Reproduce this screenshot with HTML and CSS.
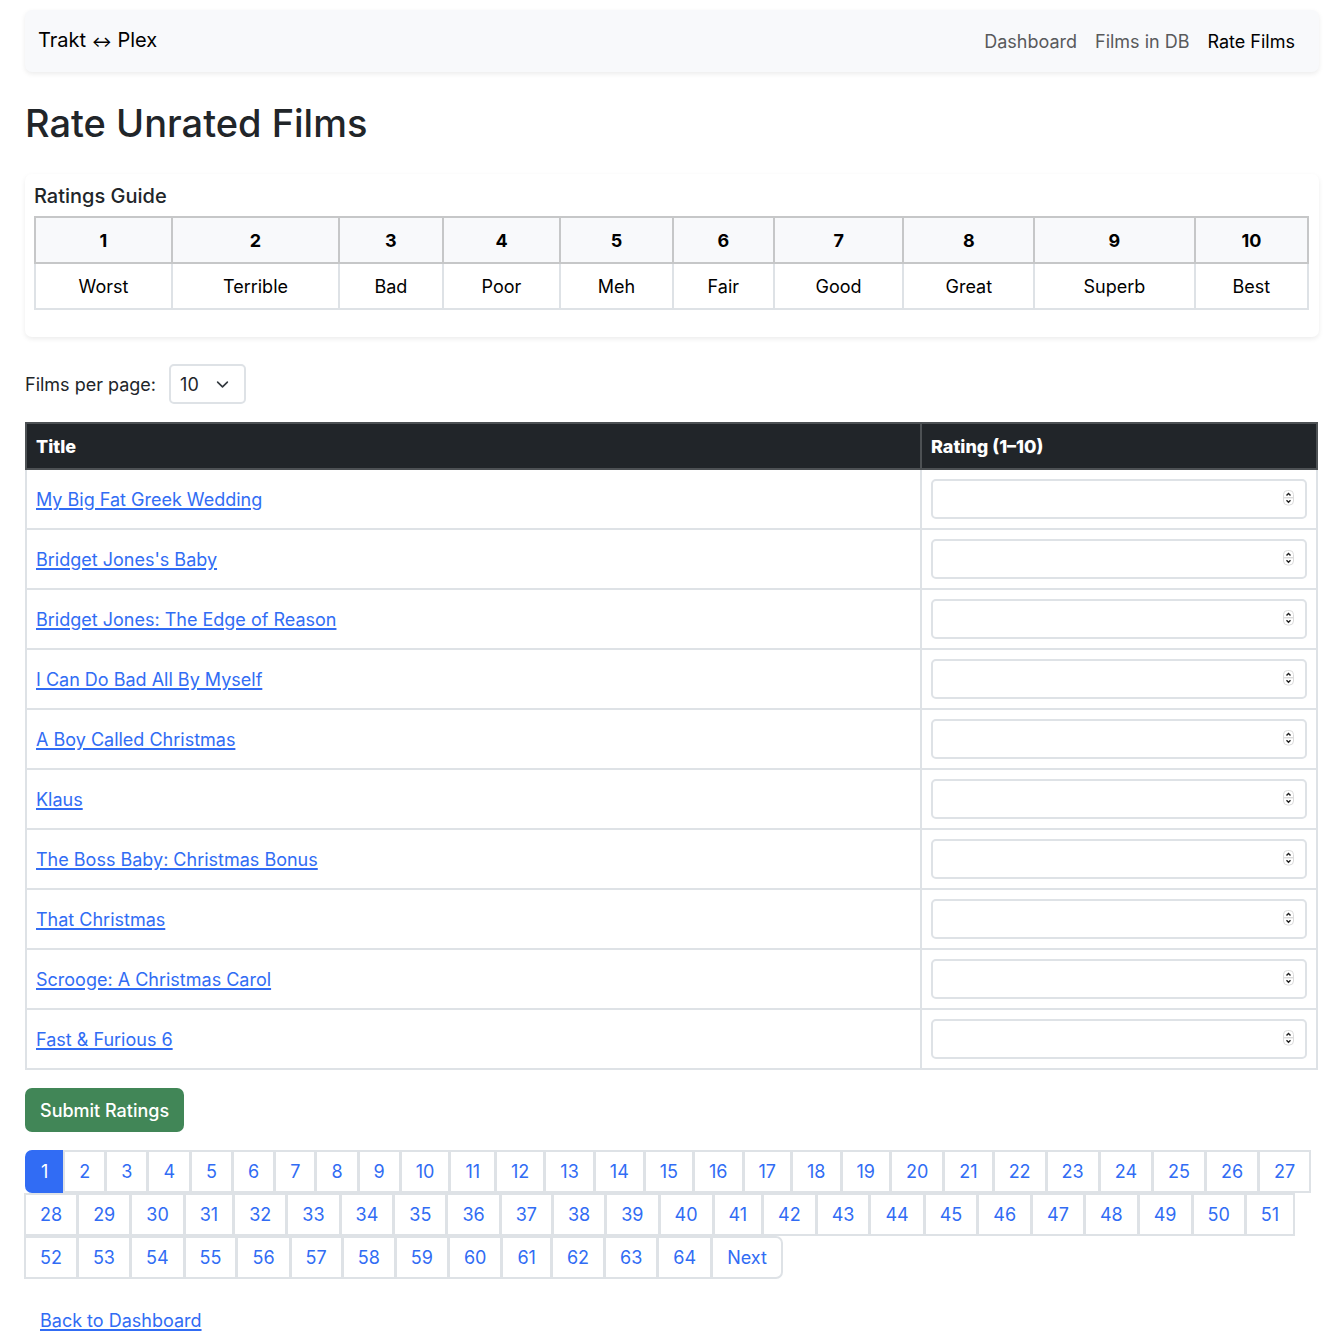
FILE: index.html
```html
<!DOCTYPE html>
<html lang="en">
<head>
<meta charset="utf-8">
<meta name="viewport" content="width=device-width, initial-scale=1">
<title>Rate Unrated Films</title>
<link rel="stylesheet" href="styles.css">
</head>
<body>
<nav class="navbar">
  <a class="brand" href="#">Trakt <span class="arrow">↔</span> Plex</a>
  <ul class="nav-links">
    <li><a href="#">Dashboard</a></li>
    <li><a href="#">Films in DB</a></li>
    <li><a class="current" href="#" aria-current="page">Rate Films</a></li>
  </ul>
</nav>
<main>
  <h1>Rate Unrated Films</h1>
  <section class="guide">
    <h2>Ratings Guide</h2>
    <table class="guide-table">
      <thead>
        <tr><th>1</th><th>2</th><th>3</th><th>4</th><th>5</th><th>6</th><th>7</th><th>8</th><th>9</th><th>10</th></tr>
      </thead>
      <tbody>
        <tr><td>Worst</td><td>Terrible</td><td>Bad</td><td>Poor</td><td>Meh</td><td>Fair</td><td>Good</td><td>Great</td><td>Superb</td><td>Best</td></tr>
      </tbody>
    </table>
  </section>
  <form class="per-page">
    <label for="per-page">Films per page:</label>
    <select id="per-page"><option>10</option><option>25</option><option>50</option></select>
  </form>
  <form>
    <table class="films">
      <thead>
        <tr><th>Title</th><th class="rating-col">Rating (1–10)</th></tr>
      </thead>
      <tbody>
        <tr><td><a href="#" id="f1">My Big Fat Greek Wedding</a></td><td><input type="number" min="1" max="10" aria-labelledby="f1"></td></tr>
        <tr><td><a href="#" id="f2">Bridget Jones's Baby</a></td><td><input type="number" min="1" max="10" aria-labelledby="f2"></td></tr>
        <tr><td><a href="#" id="f3">Bridget Jones: The Edge of Reason</a></td><td><input type="number" min="1" max="10" aria-labelledby="f3"></td></tr>
        <tr><td><a href="#" id="f4">I Can Do Bad All By Myself</a></td><td><input type="number" min="1" max="10" aria-labelledby="f4"></td></tr>
        <tr><td><a href="#" id="f5">A Boy Called Christmas</a></td><td><input type="number" min="1" max="10" aria-labelledby="f5"></td></tr>
        <tr><td><a href="#" id="f6">Klaus</a></td><td><input type="number" min="1" max="10" aria-labelledby="f6"></td></tr>
        <tr><td><a href="#" id="f7">The Boss Baby: Christmas Bonus</a></td><td><input type="number" min="1" max="10" aria-labelledby="f7"></td></tr>
        <tr><td><a href="#" id="f8">That Christmas</a></td><td><input type="number" min="1" max="10" aria-labelledby="f8"></td></tr>
        <tr><td><a href="#" id="f9">Scrooge: A Christmas Carol</a></td><td><input type="number" min="1" max="10" aria-labelledby="f9"></td></tr>
        <tr><td><a href="#" id="f10">Fast &amp; Furious 6</a></td><td><input type="number" min="1" max="10" aria-labelledby="f10"></td></tr>
      </tbody>
    </table>
    <button class="submit" type="submit">Submit Ratings</button>
  </form>
  <nav aria-label="Pages">
    <ul class="pages">
      <li><a class="active" href="#" aria-current="page">1</a></li>
      <li><a href="#">2</a></li><li><a href="#">3</a></li><li><a href="#">4</a></li><li><a href="#">5</a></li><li><a href="#">6</a></li><li><a href="#">7</a></li><li><a href="#">8</a></li><li><a href="#">9</a></li>
      <li><a href="#">10</a></li><li><a href="#">11</a></li><li><a href="#">12</a></li><li><a href="#">13</a></li><li><a href="#">14</a></li><li><a href="#">15</a></li><li><a href="#">16</a></li><li><a href="#">17</a></li><li><a href="#">18</a></li><li><a href="#">19</a></li>
      <li><a href="#">20</a></li><li><a href="#">21</a></li><li><a href="#">22</a></li><li><a href="#">23</a></li><li><a href="#">24</a></li><li><a href="#">25</a></li><li><a href="#">26</a></li><li><a href="#">27</a></li><li><a href="#">28</a></li><li><a href="#">29</a></li>
      <li><a href="#">30</a></li><li><a href="#">31</a></li><li><a href="#">32</a></li><li><a href="#">33</a></li><li><a href="#">34</a></li><li><a href="#">35</a></li><li><a href="#">36</a></li><li><a href="#">37</a></li><li><a href="#">38</a></li><li><a href="#">39</a></li>
      <li><a href="#">40</a></li><li><a href="#">41</a></li><li><a href="#">42</a></li><li><a href="#">43</a></li><li><a href="#">44</a></li><li><a href="#">45</a></li><li><a href="#">46</a></li><li><a href="#">47</a></li><li><a href="#">48</a></li><li><a href="#">49</a></li>
      <li><a href="#">50</a></li><li><a href="#">51</a></li><li><a href="#">52</a></li><li><a href="#">53</a></li><li><a href="#">54</a></li><li><a href="#">55</a></li><li><a href="#">56</a></li><li><a href="#">57</a></li><li><a href="#">58</a></li><li><a href="#">59</a></li>
      <li><a href="#">60</a></li><li><a href="#">61</a></li><li><a href="#">62</a></li><li><a href="#">63</a></li><li><a href="#">64</a></li>
      <li><a class="next" href="#">Next</a></li>
    </ul>
  </nav>
  <a class="back" href="#">Back to Dashboard</a>
</main>
</body>
</html>
```
FILE: styles.css
```css
* { box-sizing: border-box; }

body {
  margin: 0;
  padding: 10px 13px 8px 25px;
  background: #fff;
  color: #212529;
  font: 18px/27px Inter, "Liberation Sans", sans-serif;
}

a { color: #316cf4; text-underline-offset: 2px; text-decoration-thickness: 2px; }

.navbar {
  display: flex;
  align-items: center;
  justify-content: space-between;
  height: 62px;
  padding: 0 24px 0 13px;
  background: #f8f9fb;
  border-radius: 7px;
  box-shadow: 0 2px 5px rgba(0, 0, 0, 0.08);
}

.brand { color: #000; font-size: 20px; text-decoration: none; }
.arrow { font-size: 15px; font-weight: 500; }

.nav-links {
  display: flex;
  gap: 18px;
  margin: 0;
  padding: 0;
  list-style: none;
}

.nav-links a { color: #585a5c; text-decoration: none; }
.nav-links a.current { color: #000; }

h1 {
  margin: 27px 0;
  font-size: 38px;
  line-height: 48px;
  font-weight: 500;
}

.guide {
  padding: 10px 10px 27px 9px;
  border-radius: 7px;
  box-shadow: 0 2px 5px rgba(0, 0, 0, 0.08);
}

.guide h2 {
  margin: 0 0 8px;
  font-size: 20px;
  line-height: 24px;
  font-weight: 500;
}

table { width: 100%; border-collapse: collapse; }

th, td {
  height: 46px;
  padding: 8px 9px;
  border: 2px solid #dee2e6;
}

.guide-table { color: #000; text-align: center; }
.guide-table th { background: #f8f9fb; border-color: #c6c7c8; }

.per-page {
  display: flex;
  align-items: center;
  gap: 13px;
  margin: 27px 0 18px;
}

select {
  appearance: none;
  width: 77px;
  height: 40px;
  padding: 0 9px;
  border: 2px solid #dee2e6;
  border-radius: 5px;
  background: #fff url("data:image/svg+xml,%3Csvg xmlns='http://www.w3.org/2000/svg' viewBox='0 0 16 16'%3E%3Cpath fill='none' stroke='%23343a40' stroke-linecap='round' stroke-linejoin='round' stroke-width='2' d='m2 5 6 6 6-6'/%3E%3C/svg%3E") no-repeat right 15px center / 13px 13px;
  color: #212529;
  font: inherit;
}

.films { width: calc(100% - 1px); text-align: left; }
.films th { background: #212529; border-color: #4d5154; color: #fff; font-weight: 800; }
.films td { height: 60px; }
.films .rating-col { width: 396px; }

input {
  appearance: textfield;
  display: block;
  width: 100%;
  height: 40px;
  padding: 0 30px 0 9px;
  border: 2px solid #dee2e6;
  border-radius: 5px;
  background: #fff url("data:image/svg+xml,%3Csvg xmlns='http://www.w3.org/2000/svg' viewBox='0 0 11 16'%3E%3Crect x='.5' y='.5' width='10' height='14.5' rx='4' fill='%23fff' stroke='%23dcdcdc'/%3E%3Cpath d='M1 7.8h9' stroke='%23ccc'/%3E%3Cpath d='m3.5 5.6 2-2 2 2m-4 4.6 2 2 2-2' fill='none' stroke='%23222' stroke-width='1.4'/%3E%3C/svg%3E") no-repeat right 11px top 9px / 11px 16px;
  font: inherit;
}

input::-webkit-inner-spin-button { appearance: none; margin: 0; }

.submit {
  display: block;
  height: 44px;
  margin: 18px 0;
  padding: 0 15px;
  border: 0;
  border-radius: 7px;
  background: #418657;
  color: #fff;
  font: inherit;
  font-weight: 500;
}

.pages {
  display: flex;
  flex-wrap: wrap;
  margin: 0 0 28px;
  padding: 0;
  list-style: none;
}

.pages a {
  display: block;
  margin-left: -1px;
  padding: 6px 14px;
  border: 2px solid #dee2e6;
  text-decoration: none;
}

.pages .active {
  margin-left: 0;
  border-color: #316cf4;
  border-radius: 7px 0 0 7px;
  background: #316cf4;
  color: #fff;
}

.pages .next { border-radius: 0 7px 7px 0; }

.back { margin-left: 15px; }
```
